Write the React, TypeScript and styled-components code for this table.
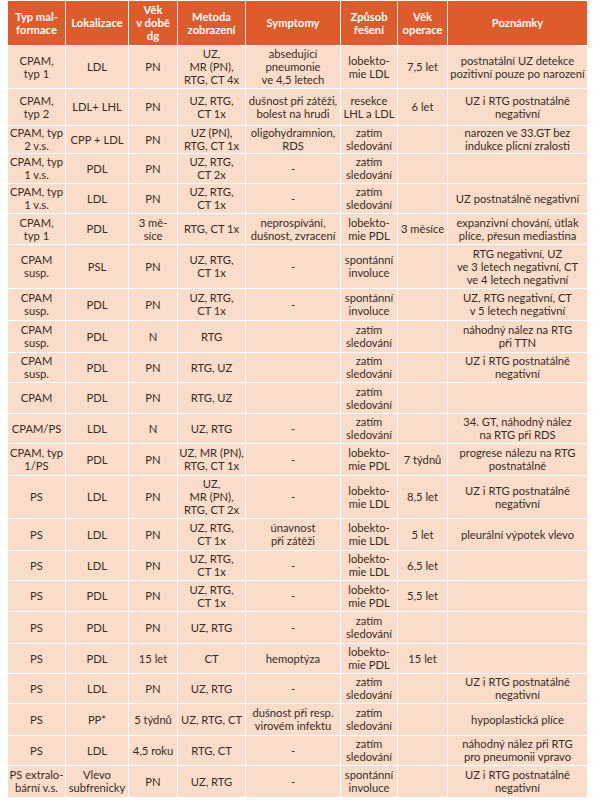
import React from "react";
import styled, { createGlobalStyle } from "styled-components";

const GlobalStyle = createGlobalStyle`
  html, body {
    margin: 0;
    padding: 0;
    background: #ffffff;
  }
  body {
    font-family: Lato, "Open Sans", sans-serif;
  }
`;

const Page = styled.div`
  padding: 1px 9px 0 7px;
`;

const Table = styled.table`
  width: 580px;
  border-collapse: collapse;
  table-layout: fixed;
  font-size: 11.2px;
  line-height: 13px;
`;

const HeadCell = styled.th<{ $w: number }>`
  box-sizing: border-box;
  width: ${(p) => p.$w}px;
  background: #de5b2b;
  color: #ffffff;
  font-weight: 700;
  text-align: center;
  vertical-align: middle;
  white-space: pre;
  border: 1px solid #ffffff;
  border-top: none;
  padding: 0 1px;
`;

const Row = styled.tr<{ $h: number }>`
  height: ${(p) => p.$h}px;
`;

const Cell = styled.td`
  box-sizing: border-box;
  background: #f9dcc9;
  color: #3a2c25;
  text-align: center;
  vertical-align: middle;
  white-space: pre;
  overflow: hidden;
  border: 1px solid #ffffff;
  padding: 0 1px;
`;

const columns: { title: string; w: number }[] = [
  { title: "Typ mal-\nformace", w: 58 },
  { title: "Lokalizace", w: 63 },
  { title: "Věk\nv době\ndg", w: 49 },
  { title: "Metoda\nzobrazení", w: 68 },
  { title: "Symptomy", w: 95 },
  { title: "Způsob\nřešení", w: 57 },
  { title: "Věk\noperace", w: 50 },
  { title: "Poznámky", w: 140 },
];

const rows: { h: number; cells: string[] }[] = [
  { h: 43, cells: ["CPAM,\ntyp 1", "LDL", "PN", "UZ,\nMR (PN),\nRTG, CT 4x", "absedující\npneumonie\nve 4,5 letech", "lobekto-\nmie LDL", "7,5 let", "postnatální UZ detekce\npozitivní pouze po narození"] },
  { h: 37, cells: ["CPAM,\ntyp 2", "LDL+ LHL", "PN", "UZ, RTG,\nCT 1x", "dušnost při zátěži,\nbolest na hrudi", "resekce\nLHL a LDL", "6 let", "UZ i RTG postnatálně\nnegativní"] },
  { h: 28, cells: ["CPAM, typ\n2 v.s.", "CPP + LDL", "PN", "UZ (PN),\nRTG, CT 1x", "oligohydramnion,\nRDS", "zatím\nsledování", "", "narozen ve 33.GT bez\nindukce plicní zralosti"] },
  { h: 30, cells: ["CPAM, typ\n1 v.s.", "PDL", "PN", "UZ, RTG,\nCT 2x", "-", "zatím\nsledování", "", ""] },
  { h: 30, cells: ["CPAM, typ\n1 v.s.", "LDL", "PN", "UZ, RTG,\nCT 1x", "-", "zatím\nsledování", "", "UZ postnatálně negativní"] },
  { h: 31, cells: ["CPAM,\ntyp 1", "PDL", "3 mě-\nsíce", "RTG, CT 1x", "neprospívání,\ndušnost, zvracení", "lobekto-\nmie PDL", "3 měsíce", "expanzivní chování, útlak\nplíce, přesun mediastina"] },
  { h: 44, cells: ["CPAM\nsusp.", "PSL", "PN", "UZ, RTG,\nCT 1x", "-", "spontánní\ninvoluce", "", "RTG negativní, UZ\nve 3 letech negativní, CT\nve 4 letech negativní"] },
  { h: 32, cells: ["CPAM\nsusp.", "PDL", "PN", "UZ, RTG,\nCT 1x", "-", "spontánní\ninvoluce", "", "UZ, RTG negativní, CT\nv 5 letech negativní"] },
  { h: 32, cells: ["CPAM\nsusp.", "PDL", "N", "RTG", "", "zatím\nsledování", "", "náhodný nález na RTG\npři TTN"] },
  { h: 30, cells: ["CPAM\nsusp.", "PDL", "PN", "RTG, UZ", "", "zatím\nsledování", "", "UZ i RTG postnatálně\nnegativní"] },
  { h: 31, cells: ["CPAM", "PDL", "PN", "RTG, UZ", "", "zatím\nsledování", "", ""] },
  { h: 30, cells: ["CPAM/PS", "LDL", "N", "UZ, RTG", "-", "zatím\nsledování", "", "34. GT, náhodný nález\nna RTG při RDS"] },
  { h: 32, cells: ["CPAM, typ\n1/PS", "PDL", "PN", "UZ, MR (PN),\nRTG, CT 1x", "-", "lobekto-\nmie PDL", "7 týdnů", "progrese nálezu na RTG\npostnatálně"] },
  { h: 43, cells: ["PS", "LDL", "PN", "UZ,\nMR (PN),\nRTG, CT 2x", "-", "lobekto-\nmie LDL", "8,5 let", "UZ i RTG postnatálně\nnegativní"] },
  { h: 32, cells: ["PS", "LDL", "PN", "UZ, RTG,\nCT 1x", "únavnost\npři zátěži", "lobekto-\nmie LDL", "5 let", "pleurální výpotek vlevo"] },
  { h: 30, cells: ["PS", "LDL", "PN", "UZ, RTG,\nCT 1x", "-", "lobekto-\nmie LDL", "6,5 let", ""] },
  { h: 31, cells: ["PS", "PDL", "PN", "UZ, RTG,\nCT 1x", "-", "lobekto-\nmie PDL", "5,5 let", ""] },
  { h: 32, cells: ["PS", "PDL", "PN", "UZ, RTG", "-", "zatím\nsledování", "", ""] },
  { h: 30, cells: ["PS", "PDL", "15 let", "CT", "hemoptýza", "lobekto-\nmie PDL", "15 let", ""] },
  { h: 30, cells: ["PS", "LDL", "PN", "UZ, RTG", "-", "zatím\nsledování", "", "UZ i RTG postnatálně\nnegativní"] },
  { h: 32, cells: ["PS", "PP*", "5 týdnů", "UZ, RTG, CT", "dušnost při resp.\nvirovém infektu", "zatím\nsledování", "", "hypoplastická plíce"] },
  { h: 30, cells: ["PS", "LDL", "4,5 roku", "RTG, CT", "-", "zatím\nsledování", "", "náhodný nález při RTG\npro pneumonii vpravo"] },
  { h: 32, cells: ["PS extralo-\nbární v.s.", "Vlevo\nsubfrenicky", "PN", "UZ, RTG", "-", "spontánní\ninvoluce", "", "UZ i RTG postnatálně\nnegativní"] },
];

const App = () => {
  return (
    <Page>
      <GlobalStyle />
      <Table>
        <thead>
          <Row $h={44}>
            {columns.map((col) => (
              <HeadCell key={col.title} $w={col.w}>
                {col.title}
              </HeadCell>
            ))}
          </Row>
        </thead>
        <tbody>
          {rows.map((row, i) => (
            <Row key={i} $h={row.h}>
              {row.cells.map((text, j) => (
                <Cell key={j}>{text}</Cell>
              ))}
            </Row>
          ))}
        </tbody>
      </Table>
    </Page>
  );
};

export default App;
